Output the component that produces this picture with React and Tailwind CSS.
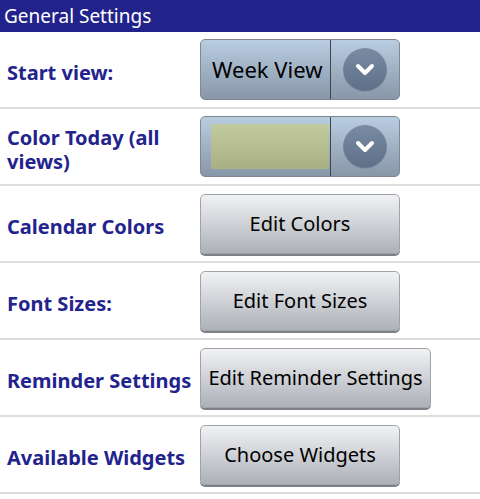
import React from 'react';

const font = { fontFamily: '"Noto Sans", "Open Sans", sans-serif' };

function Chevron() {
  return (
    <div className="w-[44px] h-[44px] rounded-full bg-gradient-to-b from-[#7a8ca3] to-[#5d6f86] flex items-center justify-center shadow-[inset_0_-1px_1px_rgba(255,255,255,0.25)]">
      <svg width="20" height="14" viewBox="0 0 20 14">
        <polyline points="3,3 10,10 17,3" fill="none" stroke="white" strokeWidth="4" strokeLinecap="round" strokeLinejoin="round" />
      </svg>
    </div>
  );
}

function Dropdown({ children }) {
  return (
    <div className="w-[200px] h-[61px] flex rounded-[5px] border border-[#7f8893] bg-gradient-to-b from-[#b9cde2] to-[#8897a8] overflow-hidden">
      <div className="w-[129px] flex items-center">{children}</div>
      <div className="w-px bg-[#3e4550]" />
      <div className="flex-1 flex items-center justify-center">
        <Chevron />
      </div>
    </div>
  );
}

function Btn({ label, wide }) {
  return (
    <div
      className={`${wide ? 'w-[231px]' : 'w-[200px]'} h-[60px] rounded-[5px] border border-[#9fa3a9] bg-gradient-to-b from-[#f1f2f4] to-[#adb1b8] shadow-[0_2px_0_#7d8087] flex items-center justify-center text-[20px] text-black`}
    >
      {label}
    </div>
  );
}

function Row({ label, children }) {
  return (
    <div className="h-[77px] flex items-center border-b-2 border-[#dedede]">
      <div className="w-[200px] pl-[7px] pr-2 mt-[6px] text-[20px] leading-[24px] font-bold text-[#23238d]">{label}</div>
      {children}
    </div>
  );
}

export default function App() {
  return (
    <div className="w-[480px] h-[499px] bg-white overflow-hidden" style={font}>
      <div className="h-[32px] bg-[#22228b] text-white text-[19px] leading-[32px] pl-[4px]">General Settings</div>
      <Row label="Start view:">
        <Dropdown>
          <span className="pl-[11px] text-[22px] text-black whitespace-nowrap">Week View</span>
        </Dropdown>
      </Row>
      <Row label="Color Today (all views)">
        <Dropdown>
          <div className="ml-[10px] w-[118px] h-[45px] bg-gradient-to-b from-[#c2cb9f] to-[#a8b083]" />
        </Dropdown>
      </Row>
      <Row label="Calendar Colors">
        <Btn label="Edit Colors" />
      </Row>
      <Row label="Font Sizes:">
        <Btn label="Edit Font Sizes" />
      </Row>
      <Row label="Reminder Settings">
        <Btn label="Edit Reminder Settings" wide />
      </Row>
      <Row label="Available Widgets">
        <Btn label="Choose Widgets" />
      </Row>
    </div>
  );
}
